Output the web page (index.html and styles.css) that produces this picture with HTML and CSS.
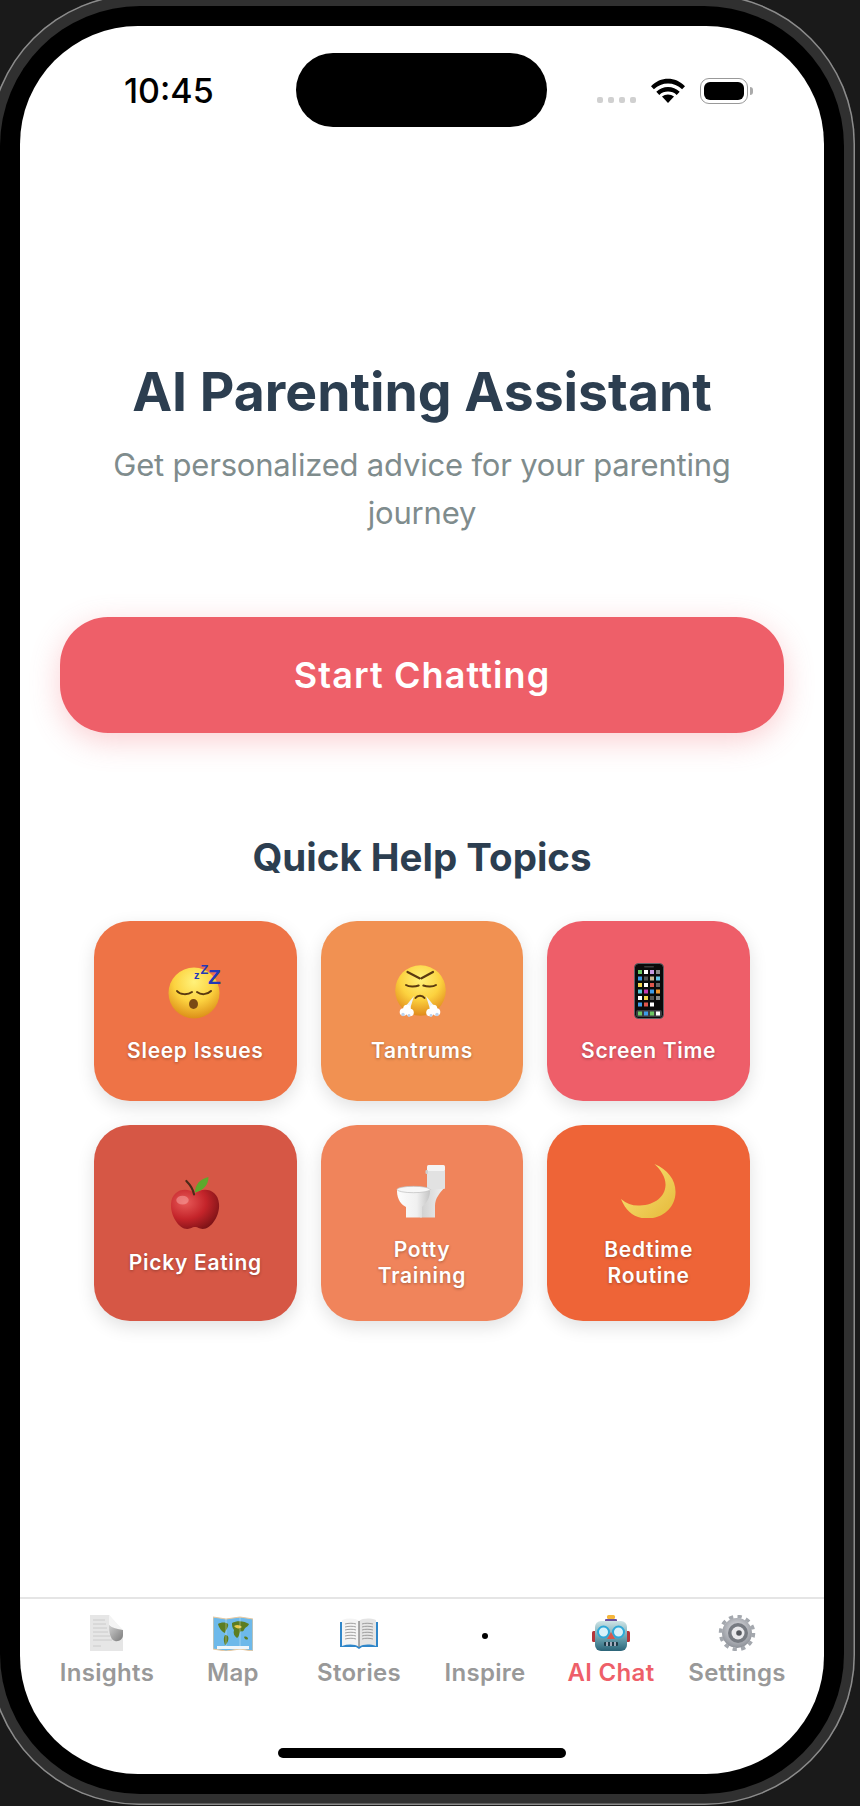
FILE: index.html
```html
<!DOCTYPE html>
<html lang="en">

<head>
    <meta charset="utf-8" />
    <title>AI Parenting Assistant</title>
    <link rel="stylesheet" href="styles.css">
</head>

<body>

    <div class="device">
        <div class="bezel">
            <div class="screen">

                <div class="status-bar">
                    <span class="time">10:45</span>
                    <div class="island"></div>
                    <div class="status-icons">
                        <div class="cell-dots"><i></i><i></i><i></i><i></i></div>
                        <svg class="wifi" width="34" height="25" viewBox="0 0 34 25">
                            <path d="M17 25l-6-6.4c3.400-2.900 8.600-2.900 12 0z" />
                            <path d="M2.900 11.300L0 8.200C9.500-1.700 24.500-1.700 34 8.200l-2.900 3.100C23.200 3.500 10.800 3.500 2.900 11.300z" />
                            <path d="M8.300 16.900l-3-3.100c6.500-6.300 16.900-6.300 23.400 0l-3 3.100c-4.800-4.400-12.600-4.400-17.400 0z" />
                        </svg>
                        <div class="battery"><div class="battery-fill"></div></div>
                        <div class="battery-nub"></div>
                    </div>
                </div>

                <div class="content">
                    <h1 class="title">AI Parenting Assistant</h1>
                    <p class="subtitle">Get personalized advice for your parenting journey</p>

                    <button type="button" class="start-btn">Start Chatting</button>

                    <h2 class="topics-title">Quick Help Topics</h2>

                    <div class="topics">
                        <div class="topic topic-sleep">
                            <div class="topic-icon">
                                <svg width="56" height="56" viewBox="0 0 56 56">
                                    <defs>
                                        <radialGradient id="face1" cx="50%" cy="28%" r="72%">
                                            <stop offset="0" stop-color="#fff27a" />
                                            <stop offset=".55" stop-color="#fcd23f" />
                                            <stop offset="1" stop-color="#dc8f18" />
                                        </radialGradient>
                                    </defs>
                                    <circle cx="27" cy="30" r="25.500" fill="url(#face1)" />
                                    <path d="M10 28c3 4 11 4 15 1M30 29c4 3 10 3 14-1" fill="none" stroke="#5b3a10" stroke-width="2" stroke-linecap="round" />
                                    <ellipse cx="26.500" cy="41" rx="4.500" ry="5" fill="#7a4a14" />
                                    <text x="27" y="16" class="zzz zzz-s">z</text>
                                    <text x="33.500" y="11" class="zzz zzz-m">Z</text>
                                    <text x="41" y="21" class="zzz zzz-l">Z</text>
                                </svg>
                            </div>
                            <span class="topic-label">Sleep Issues</span>
                        </div>

                        <div class="topic topic-tantrum">
                            <div class="topic-icon">
                                <svg width="56" height="56" viewBox="0 0 56 56">
                                    <defs>
                                        <radialGradient id="face2" cx="50%" cy="28%" r="72%">
                                            <stop offset="0" stop-color="#fff27a" />
                                            <stop offset=".55" stop-color="#fcd23f" />
                                            <stop offset="1" stop-color="#e08a1c" />
                                        </radialGradient>
                                    </defs>
                                    <circle cx="26.500" cy="27.500" r="25.300" fill="url(#face2)" />
                                    <path d="M13.500 9l12 6.300M39 9l-11.500 6.300" stroke="#5b3a10" stroke-width="2.200" stroke-linecap="round" />
                                    <path d="M12 22c3 2 9 2 12.700 .5M29.300 22.500c4 1.500 9.700 1.500 12.700-.5" fill="none" stroke="#5b3a10" stroke-width="2" stroke-linecap="round" />
                                    <path d="M21.500 35c2-3 7-3 9 0" fill="none" stroke="#5b3a10" stroke-width="2" stroke-linecap="round" />
                                    <path d="M20 33l-9 11 5 2zM32 33l9 11-5 2z" fill="#eef3fa" />
                                    <g fill="#fff">
                                        <circle cx="9.500" cy="49" r="3.800" />
                                        <circle cx="16" cy="49.500" r="3.800" />
                                        <circle cx="13" cy="45.500" r="3.800" />
                                        <circle cx="36" cy="49.500" r="3.800" />
                                        <circle cx="42.500" cy="49" r="3.800" />
                                        <circle cx="39.500" cy="45.500" r="3.800" />
                                    </g>
                                    <g fill="#bcd3ee">
                                        <circle cx="9" cy="51.500" r="1.700" />
                                        <circle cx="43" cy="51.500" r="1.700" />
                                        <circle cx="15" cy="52.500" r="1.400" />
                                        <circle cx="37" cy="52.500" r="1.400" />
                                    </g>
                                </svg>
                            </div>
                            <span class="topic-label">Tantrums</span>
                        </div>

                        <div class="topic topic-screen">
                            <div class="topic-icon">
                                <svg width="30" height="56" viewBox="0 0 30 56">
                                    <rect x=".5" y=".5" width="29" height="55" rx="4" fill="#0a0a0a" stroke="#5e6066" />
                                    <rect x="10" y="3" width="10" height="1.500" rx=".7" fill="#3a3a3a" />
                                    <g class="phone-apps">
                                        <rect x="4" y="7" width="4" height="4" fill="#6cc763" />
                                        <rect x="10" y="7" width="4" height="4" fill="#fff" />
                                        <rect x="16" y="7" width="4" height="4" fill="#c79be0" />
                                        <rect x="22" y="7" width="4" height="4" fill="#8a8a8a" />
                                        <rect x="4" y="13.500" width="4" height="4" fill="#3d9be8" />
                                        <rect x="10" y="13.500" width="4" height="4" fill="#555" />
                                        <rect x="16" y="13.500" width="4" height="4" fill="#c8b896" />
                                        <rect x="22" y="13.500" width="4" height="4" fill="#63c7e8" />
                                        <rect x="4" y="20" width="4" height="4" fill="#f2d14a" />
                                        <rect x="10" y="20" width="4" height="4" fill="#fff" />
                                        <rect x="16" y="20" width="4" height="4" fill="#e0574c" />
                                        <rect x="22" y="20" width="4" height="4" fill="#666" />
                                        <rect x="4" y="26.500" width="4" height="4" fill="#57c3d8" />
                                        <rect x="10" y="26.500" width="4" height="4" fill="#c33ab0" />
                                        <rect x="16" y="26.500" width="4" height="4" fill="#3d9be8" />
                                        <rect x="22" y="26.500" width="4" height="4" fill="#ef962c" />
                                        <rect x="4" y="33" width="4" height="4" fill="#fff" />
                                        <rect x="10" y="33" width="4" height="4" fill="#f2d14a" />
                                        <rect x="16" y="33" width="4" height="4" fill="#555" />
                                        <rect x="22" y="33" width="4" height="4" fill="#888" />
                                        <rect x="4" y="39.500" width="4" height="4" fill="#3d9be8" />
                                        <rect x="10" y="39.500" width="4" height="4" fill="#e0574c" />
                                        <rect x="16" y="39.500" width="4" height="4" fill="#fff" />
                                    </g>
                                    <rect x="2" y="47" width="26" height="7" rx="2" fill="#3a3c40" />
                                    <rect x="4" y="48.500" width="4" height="4" fill="#6cc763" />
                                    <rect x="10" y="48.500" width="4" height="4" fill="#3d9be8" />
                                    <rect x="16" y="48.500" width="4" height="4" fill="#6cc763" />
                                    <rect x="22" y="48.500" width="4" height="4" fill="#fff" />
                                </svg>
                            </div>
                            <span class="topic-label">Screen Time</span>
                        </div>

                        <div class="topic topic-picky">
                            <div class="topic-icon">
                                <svg width="50" height="54" viewBox="0 0 52 56">
                                    <defs>
                                        <radialGradient id="apple" cx="30%" cy="32%" r="78%">
                                            <stop offset="0" stop-color="#e85a58" />
                                            <stop offset=".55" stop-color="#c4242a" />
                                            <stop offset="1" stop-color="#7c1216" />
                                        </radialGradient>
                                    </defs>
                                    <path d="M26 18C18 11 2 13 1 29c-.600 12 8 26 17 26 4 0 5-2 8-2s4 2 8 2c9 0 18-14 17-26-1-16-17-18-25-11z" fill="url(#apple)" />
                                    <ellipse cx="13" cy="25" rx="6.500" ry="4.500" fill="#f7a3a0" opacity=".55" />
                                    <path d="M25 19C24 13 21 9 17 5" fill="none" stroke="#4a2a18" stroke-width="2.200" stroke-linecap="round" />
                                    <path d="M26 17C26 9 31 3 40 1c0 8-5 14-14 16z" fill="#5ea82c" />
                                </svg>
                            </div>
                            <span class="topic-label">Picky Eating</span>
                        </div>

                        <div class="topic topic-potty">
                            <div class="topic-icon">
                                <svg width="56" height="56" viewBox="0 0 56 56">
                                    <defs>
                                        <linearGradient id="porcelain" x1="0" y1="0" x2="1" y2="0">
                                            <stop offset="0" stop-color="#fdfdfd" />
                                            <stop offset=".6" stop-color="#f0f0f0" />
                                            <stop offset="1" stop-color="#c4c4c4" />
                                        </linearGradient>
                                        <linearGradient id="tank" x1="0" y1="0" x2="1" y2="0">
                                            <stop offset="0" stop-color="#cfcfcf" />
                                            <stop offset="1" stop-color="#efefef" />
                                        </linearGradient>
                                    </defs>
                                    <path d="M35 26h15c-4 5-9 10-9 18v11.500H26V44z" fill="url(#tank)" />
                                    <rect x="33" y="8" width="18" height="19" rx="1" fill="#e2e2e2" />
                                    <rect x="33" y="3" width="18" height="6" rx="1.500" fill="#f4f4f4" />
                                    <rect x="31.500" y="8" width="2.500" height="4" rx="1" fill="#cfcfcf" />
                                    <path d="M3 29c0-5 33-5 33 0 0 9-6 14-8 16v10.500H12V45C8 43 3 38 3 29z" fill="url(#porcelain)" />
                                    <ellipse cx="19.500" cy="27.500" rx="16.500" ry="3.200" fill="#f7f7f7" stroke="#bdbdbd" stroke-width=".7" />
                                </svg>
                            </div>
                            <span class="topic-label">Potty Training</span>
                        </div>

                        <div class="topic topic-bedtime">
                            <div class="topic-icon">
                                <svg width="56" height="56" viewBox="0 0 56 56">
                                    <defs>
                                        <linearGradient id="moon" x1="0" y1="0" x2="1" y2="1">
                                            <stop offset="0" stop-color="#fbe77a" />
                                            <stop offset="1" stop-color="#e5b93a" />
                                        </linearGradient>
                                    </defs>
                                    <path d="M33.500 2C47 8 55 18 54.500 31 54 46 41 57 25 56.500 13 56 5 49 0 37c6 5 12 7 19 6.500 15-.5 25-9 25.500-20C45 16 40 8 33.500 2z" fill="url(#moon)" />
                                </svg>
                            </div>
                            <span class="topic-label">Bedtime Routine</span>
                        </div>
                    </div>
                </div>

                <nav class="tab-bar">
                    <div class="tab">
                        <svg class="tab-icon" width="34" height="36" viewBox="0 0 34 36">
                            <defs>
                                <linearGradient id="curl" x1="0" y1="0" x2="1" y2="1">
                                    <stop offset="0" stop-color="#d0d0d0" />
                                    <stop offset="1" stop-color="#7a7a7a" />
                                </linearGradient>
                            </defs>
                            <path d="M0 0h19l14 16v20H0z" fill="#e6e6e6" />
                            <path d="M19 0l14 15c-5-1-11-2-14-5z" fill="#f4f4f4" />
                            <path d="M19 10c3 3 8 4 14 5v5c0 4-4 7-8 6-5-1-6-10-6-16z" fill="url(#curl)" />
                            <path d="M3 5h12M3 9h13M3 13h14M3 17h15M3 21h17M3 25h19M3 31h8" stroke="#c4c4c4" stroke-width=".8" />
                        </svg>
                        <span>Insights</span>
                    </div>

                    <div class="tab">
                        <svg class="tab-icon" width="40" height="36" viewBox="0 0 40 36">
                            <path d="M0 2l13 2 14-2 13 2v32l-13-2-14 2-13-2z" fill="#6db9ea" stroke="#e8c9a0" stroke-width="1.200" />
                            <path d="M5 9c3-2 8-2 10 0 1 3-2 5-3 9-3-1-6-5-7-9zM12 20c3 0 4 2 3 6-1 2-2 4-3 4-1-3-2-7 0-10zM19 8c5-3 13-2 17 1-1 3-4 3-5 6-2 3-3 0-4 2s-1 5-3 6c-3-2-4-5-3-8-2-2-2-5-2-7zM31 22c2-1 4 0 4 2-1 1-3 1-4-2z" fill="#5c7d22" />
                            <path d="M21 11c3-2 6-1 8 1-2 2-6 2-8-1z" fill="#e8c94a" />
                            <path d="M13 3.500v29M27 2.500v29" stroke="#fff" stroke-width=".6" opacity=".6" />
                            <path d="M4 31h32v3H4z" fill="#eef6fb" />
                        </svg>
                        <span>Map</span>
                    </div>

                    <div class="tab">
                        <svg class="tab-icon" width="38" height="36" viewBox="0 0 38 36">
                            <path d="M0 7h38v25H22l-3 2-3-2H0z" fill="#2f86c9" />
                            <path d="M2 5c6-2 13-2 17 1v26c-4-3-11-3-17-1z" fill="#f4f4f4" />
                            <path d="M36 5c-6-2-13-2-17 1v26c4-3 11-3 17-1z" fill="#e4e4e4" />
                            <path d="M5 9c4-1 8-1 11 0M5 12c4-1 8-1 11 0M5 15c4-1 8-1 11 0M5 18c4-1 8-1 11 0M5 21c4-1 8-1 11 0M5 24c4-1 8-1 11 0M22 9c3-1 7-1 11 0M22 12c3-1 7-1 11 0M22 15c3-1 7-1 11 0M22 18c3-1 7-1 11 0M22 21c3-1 7-1 11 0M22 24c3-1 7-1 11 0" stroke="#8a8a8a" stroke-width=".8" fill="none" />
                            <path d="M19 6v26" stroke="#777" stroke-width="1.200" />
                        </svg>
                        <span>Stories</span>
                    </div>

                    <div class="tab">
                        <div class="tab-icon tab-dot-wrap"><div class="tab-dot"></div></div>
                        <span>Inspire</span>
                    </div>

                    <div class="tab tab-active">
                        <svg class="tab-icon" width="38" height="36" viewBox="0 0 38 36">
                            <defs>
                                <linearGradient id="robot" x1="0" y1="0" x2="0" y2="1">
                                    <stop offset="0" stop-color="#cfe4e6" />
                                    <stop offset=".55" stop-color="#6aa3b0" />
                                    <stop offset="1" stop-color="#2b6478" />
                                </linearGradient>
                            </defs>
                            <rect x="0" y="16" width="5" height="11" rx="1.500" fill="#b5353a" />
                            <rect x="33" y="16" width="5" height="11" rx="1.500" fill="#b5353a" />
                            <rect x="15" y="0" width="8" height="4" rx="1.500" fill="#f5b63c" />
                            <rect x="13" y="4" width="12" height="3" rx="1" fill="#6a4f9c" />
                            <rect x="3" y="6" width="32" height="30" rx="6" fill="url(#robot)" />
                            <circle cx="11.500" cy="17" r="5.500" fill="#d8f2fa" stroke="#2ea8d8" stroke-width="2" />
                            <circle cx="26.500" cy="17" r="5.500" fill="#d8f2fa" stroke="#2ea8d8" stroke-width="2" />
                            <path d="M19 17l4 7h-8z" fill="#d8574c" />
                            <rect x="12" y="27" width="14" height="4" rx="1" fill="#1d3a48" />
                            <path d="M15 27v4M19 27v4M23 27v4" stroke="#dde" stroke-width="1.400" />
                        </svg>
                        <span>AI Chat</span>
                    </div>

                    <div class="tab">
                        <svg class="tab-icon" width="38" height="36" viewBox="0 0 38 36">
                            <defs>
                                <radialGradient id="gear" cx="50%" cy="40%" r="60%">
                                    <stop offset="0" stop-color="#e8e8ec" />
                                    <stop offset="1" stop-color="#8d9198" />
                                </radialGradient>
                            </defs>
                            <circle cx="19" cy="18" r="16.500" fill="none" stroke="#a4a8ae" stroke-width="3.500" stroke-dasharray="4.300 4.340" />
                            <circle cx="19" cy="18" r="15" fill="url(#gear)" />
                            <circle cx="20" cy="18" r="10" fill="#777b82" />
                            <circle cx="20" cy="18" r="6.500" fill="#e9e9ec" />
                            <circle cx="21" cy="18" r="2.800" fill="#55585e" />
                        </svg>
                        <span>Settings</span>
                    </div>
                </nav>

                <div class="home-indicator"></div>
            </div>
        </div>
    </div>

</body>

</html>
```

FILE: styles.css
```css
* {
    box-sizing: border-box;
    font-family: Inter, "Liberation Sans", sans-serif;
}

html,
body {
    margin: 0;
    height: 1806px;
    overflow: hidden;
    background: #1a1a1a;
}

.device {
    width: 866px;
    height: 1811px;
    margin: -6px 0 0 -11px;
    padding: 12px 11px 11px;
    border-radius: 150px;
    background: #303030;
    box-shadow: inset 0 0 0 1.500px #8c8c8c;
}

.bezel {
    height: 100%;
    padding: 20px;
    border-radius: 140px;
    background: #000;
}

.screen {
    position: relative;
    display: flex;
    flex-direction: column;
    height: 100%;
    border-radius: 118px;
    background: #fff;
    overflow: hidden;
}

/* status bar */
.status-bar {
    display: flex;
    flex: none;
    height: 101px;
    padding-top: 27px;
}

.time {
    width: 276px;
    padding: 20px 0 0 104px;
    font-size: 34px;
    font-weight: 500;
    line-height: 36px;
    color: #000;
}

.island {
    width: 251px;
    height: 74px;
    border-radius: 37px;
    background: #000;
}

.status-icons {
    display: flex;
    align-items: flex-start;
    padding: 25px 0 0 50px;
}

.cell-dots {
    display: flex;
    gap: 5px;
    margin: 19px 15px 0 0;
}

.cell-dots i {
    display: block;
    width: 6px;
    height: 6px;
    border-radius: 2px;
    background: #d0d0d0;
}

.wifi {
    margin-right: 15px;
}

.battery {
    width: 48px;
    height: 26px;
    padding: 3px;
    border: 1.500px solid #999;
    border-radius: 9px;
}

.battery-fill {
    height: 100%;
    border-radius: 6px;
    background: #000;
}

.battery-nub {
    width: 3px;
    height: 8px;
    margin: 9px 0 0 2px;
    border-radius: 0 3px 3px 0;
    background: #aaa;
}

/* main content */
.content {
    flex: 1;
    display: flex;
    flex-direction: column;
    align-items: center;
    padding: 235px 40px 0;
}

.title {
    margin: 0;
    font-size: 53.500px;
    font-weight: 700;
    line-height: 60px;
    color: #2c3e50;
}

.subtitle {
    width: 640px;
    margin: 19px 0 0;
    font-size: 31px;
    line-height: 48px;
    text-align: center;
    letter-spacing: -.2px;
    color: #7f8c8d;
}

.start-btn {
    width: 100%;
    height: 116px;
    margin-top: 80px;
    border: 0;
    border-radius: 48px;
    background: #ee5f69;
    box-shadow: 0 8px 30px rgba(238, 95, 105, .3);
    font-size: 36px;
    font-weight: 600;
    letter-spacing: 1.100px;
    color: #fff;
}

.topics-title {
    margin: 100px 0 0;
    font-size: 38.500px;
    font-weight: 700;
    line-height: 48px;
    color: #2c3e50;
}

.topics {
    display: grid;
    grid-template-columns: repeat(3, 1fr);
    gap: 24px;
    width: 656px;
    margin-top: 40px;
}

.topic {
    display: flex;
    flex-direction: column;
    align-items: center;
    justify-content: center;
    min-height: 180px;
    padding: 33px 16px 32px;
    border-radius: 36px;
    box-shadow: 0 6px 18px rgba(0, 0, 0, .12);
}

.topic-sleep { background: #ee7346; }
.topic-tantrum { background: #f19152; }
.topic-screen { background: #ee5e69; }
.topic-picky { background: #d65745; }
.topic-potty { background: #f0845b; }
.topic-bedtime { background: #ee6437; }

.topic-icon {
    display: flex;
    align-items: center;
    justify-content: center;
    height: 64px;
    margin-bottom: 15px;
}

.topic-label {
    width: 143px;
    font-size: 21px;
    font-weight: 600;
    line-height: 26px;
    text-align: center;
    letter-spacing: .7px;
    color: #fff;
    text-shadow: 0 1px 3px rgba(0, 0, 0, .3);
}

.zzz {
    font-family: "Liberation Sans", sans-serif;
    font-weight: 700;
    fill: #2438b8;
}

.zzz-s { font-size: 11px; }
.zzz-m { font-size: 13px; }
.zzz-l { font-size: 21px; }

/* tab bar */
.tab-bar {
    flex: none;
    display: flex;
    height: 177px;
    padding: 16px 24px 0;
    border-top: 2px solid #e5e5e5;
}

.tab {
    flex: 1;
    display: flex;
    flex-direction: column;
    align-items: center;
    font-size: 24px;
    font-weight: 600;
    line-height: 30px;
    letter-spacing: .3px;
    color: #999;
}

.tab-active {
    color: #ee5f69;
}

.tab-icon {
    height: 36px;
    margin-bottom: 7px;
}

.tab-dot-wrap {
    display: flex;
    align-items: center;
    justify-content: center;
    padding-top: 5px;
}

.tab-dot {
    width: 6px;
    height: 6px;
    border-radius: 50%;
    background: #000;
}

.home-indicator {
    position: absolute;
    left: 258px;
    bottom: 16px;
    width: 288px;
    height: 10px;
    border-radius: 5px;
    background: #000;
}
```
